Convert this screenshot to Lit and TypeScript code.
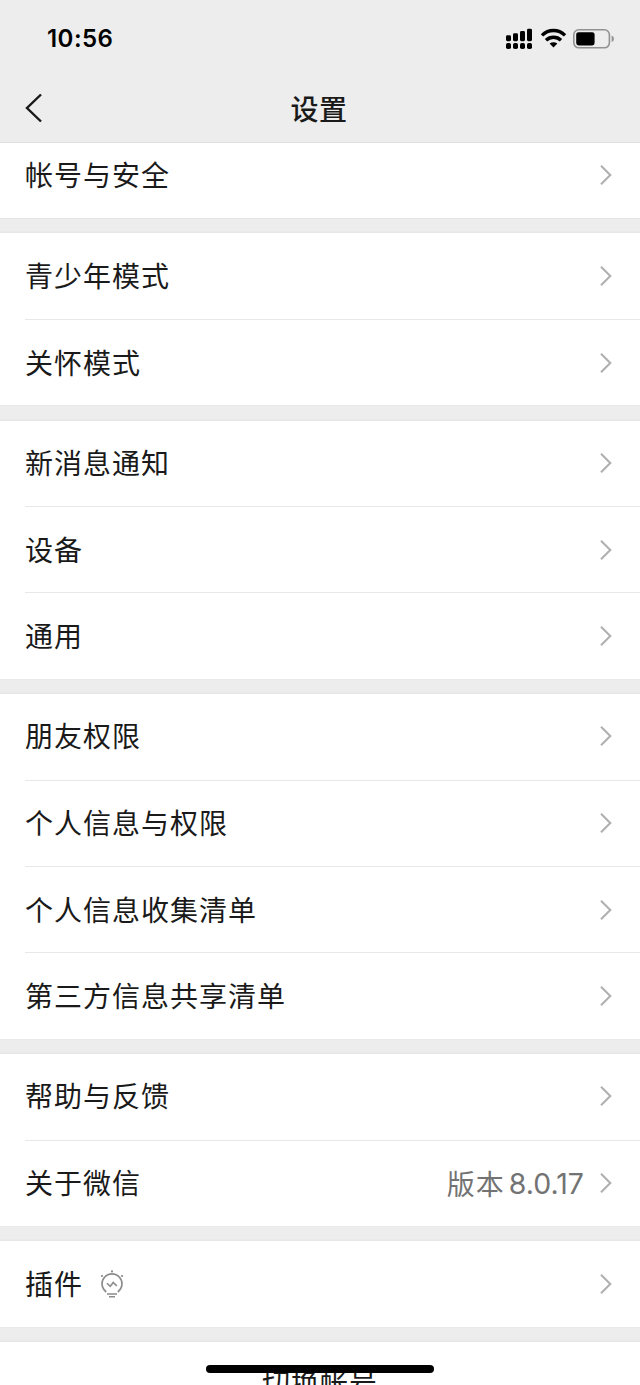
import { LitElement, html, css, svg, nothing } from "lit";
import { customElement } from "lit/decorators.js";

interface Item {
  label: string;
  value?: string;
  version?: string;
  bulb?: boolean;
}

const groups: Item[][] = [
  [{ label: "帐号与安全" }],
  [{ label: "青少年模式" }, { label: "关怀模式" }],
  [{ label: "新消息通知" }, { label: "设备" }, { label: "通用" }],
  [
    { label: "朋友权限" },
    { label: "个人信息与权限" },
    { label: "个人信息收集清单" },
    { label: "第三方信息共享清单" },
  ],
  [{ label: "帮助与反馈" }, { label: "关于微信", value: "版本", version: "8.0.17" }],
  [{ label: "插件", bulb: true }],
];

@customElement("app-root")
export class AppRoot extends LitElement {
  static styles = css`
    :host {
      display: flex;
      flex-direction: column;
      position: relative;
      width: 640px;
      height: 1385px;
      overflow: hidden;
      background: #ededed;
      color: #1a1a1a;
      font-family: "Noto Sans CJK SC", sans-serif;
    }
    svg {
      display: block;
      flex: none;
    }
    .status {
      display: flex;
      align-items: center;
      height: 77px;
      padding: 1px 26px 0 47px;
      box-sizing: border-box;
    }
    .time {
      flex: 1;
      font: 600 24px/30px Inter, sans-serif;
      letter-spacing: 0.45px;
      color: #000;
    }
    .nav {
      display: grid;
      grid-template-columns: 60px 1fr 60px;
      align-items: center;
      height: 66px;
      box-sizing: border-box;
      padding-bottom: 4px;
      border-bottom: 1px solid #e0e0e0;
      flex: none;
    }
    .back {
      padding-left: 24px;
    }
    .title {
      text-align: center;
      font-size: 28px;
      line-height: 40px;
      font-weight: 500;
      letter-spacing: 0.5px;
      padding-right: 2px;
    }
    .list {
      flex: 1;
      min-height: 0;
      overflow: hidden;
    }
    .scroll {
      display: flex;
      flex-direction: column;
      gap: 14.4px;
      margin-top: -11.3px;
    }
    .group {
      background: #fff;
      box-shadow: 0 0 0 1px #e5e5e5;
    }
    .group:nth-child(n + 2) {
      box-shadow: inset 0 1px #e6e6e6, 0 0 0 0.5px #e6e6e6;
    }
    .row {
      display: flex;
      align-items: center;
      height: 86.4px;
      box-sizing: border-box;
      margin-left: 25px;
      padding-right: 27px;
      font-size: 28px;
      line-height: 40px;
      letter-spacing: 1px;
    }
    .row + .row {
      border-top: 1px solid #e8e8e8;
    }
    .label {
      white-space: nowrap;
      padding-bottom: 2px;
    }
    .bulb {
      margin-left: 15.5px;
    }
    .space {
      flex: 1;
    }
    .value {
      display: flex;
      align-items: center;
      color: #737373;
      margin-right: 15px;
      padding-bottom: 1px;
    }
    .version {
      font-family: Inter, sans-serif;
      font-size: 28.5px;
      letter-spacing: 0;
      margin-left: 4px;
      padding-top: 2px;
    }
    .center {
      justify-content: center;
      margin-left: 0;
      padding: 0 0 4px;
    }
    .home {
      position: absolute;
      left: 206px;
      top: 1365px;
      width: 228px;
      height: 8px;
      border-radius: 4px;
      background: #000;
    }
  `;

  private signal() {
    return html`<svg width="108" height="22" viewBox="0 0 108 22">
      ${[0, 1, 2, 3].map((i) => {
        const top = [7.2, 5.2, 3, 0.8][i];
        return svg`<rect x=${i * 7} y=${top} width="5" height=${13.2 - top} rx="1.4"/>
          <rect x=${i * 7} y="15" width="5" height="6" rx="1.8"/>`;
      })}
      <g fill="none" stroke="#000" stroke-width="3.4">
        <path d="M36 7.4C42.5 .9 52.5 .9 59 7.4" />
        <path d="M40 12.2C44.2 8.2 50.8 8.2 55 12.2" />
      </g>
      <path d="M43.6 15.6Q47.5 12.8 51.4 15.6L47.5 19.6Z" />
      <rect x="67.8" y="1.8" width="35.6" height="18" rx="5" fill="none" stroke="#929292" stroke-width="1.6" />
      <rect x="70.2" y="4.2" width="18.4" height="13.2" rx="2.4" />
      <path d="M105.6 7.6Q108 8.4 108 10.8T105.6 14Z" fill="#929292" />
    </svg>`;
  }

  private bulb() {
    return html`<svg class="bulb" width="26" height="30" viewBox="0 0 26 30" fill="none" stroke="#8b8b8b" stroke-width="1.6">
      <path d="M7.2 23A10 10 0 1 1 18.8 23" />
      <path d="M8 14.2L11.2 17.4L14.2 13.4L17.8 16.8" />
      <path d="M8 25H18M10 27.8H16" />
      <g fill="#8b8b8b" stroke="none">
        <circle cx="13" cy="2.4" r="1.1" />
        <circle cx="3" cy="7" r="1.1" />
        <circle cx="23" cy="7" r="1.1" />
      </g>
    </svg>`;
  }

  private row(item: Item) {
    return html`<div class="row">
      <span class="label">${item.label}</span>
      ${item.bulb ? this.bulb() : nothing}
      <span class="space"></span>
      ${item.value
        ? html`<span class="value"><span>${item.value}</span><span class="version">${item.version}</span></span>`
        : nothing}
      <svg width="14" height="22" viewBox="0 0 14 22" fill="none" stroke="#b0b0b0" stroke-width="2.1">
        <path d="M2 1.8L11.3 11L2 20.2" />
      </svg>
    </div>`;
  }

  render() {
    return html`
      <div class="status"><span class="time">10:56</span>${this.signal()}</div>
      <div class="nav">
        <svg class="back" width="20" height="32" viewBox="0 0 20 32" fill="none" stroke="#181818" stroke-width="2.4">
          <path d="M17 2.5L3 16L17 29.5" />
        </svg>
        <span class="title">设置</span>
      </div>
      <div class="list">
        <div class="scroll">
          ${groups.map((g) => html`<div class="group">${g.map((i) => this.row(i))}</div>`)}
          <div class="group"><div class="row center">切换帐号</div></div>
        </div>
      </div>
      <div class="home"></div>
    `;
  }
}
